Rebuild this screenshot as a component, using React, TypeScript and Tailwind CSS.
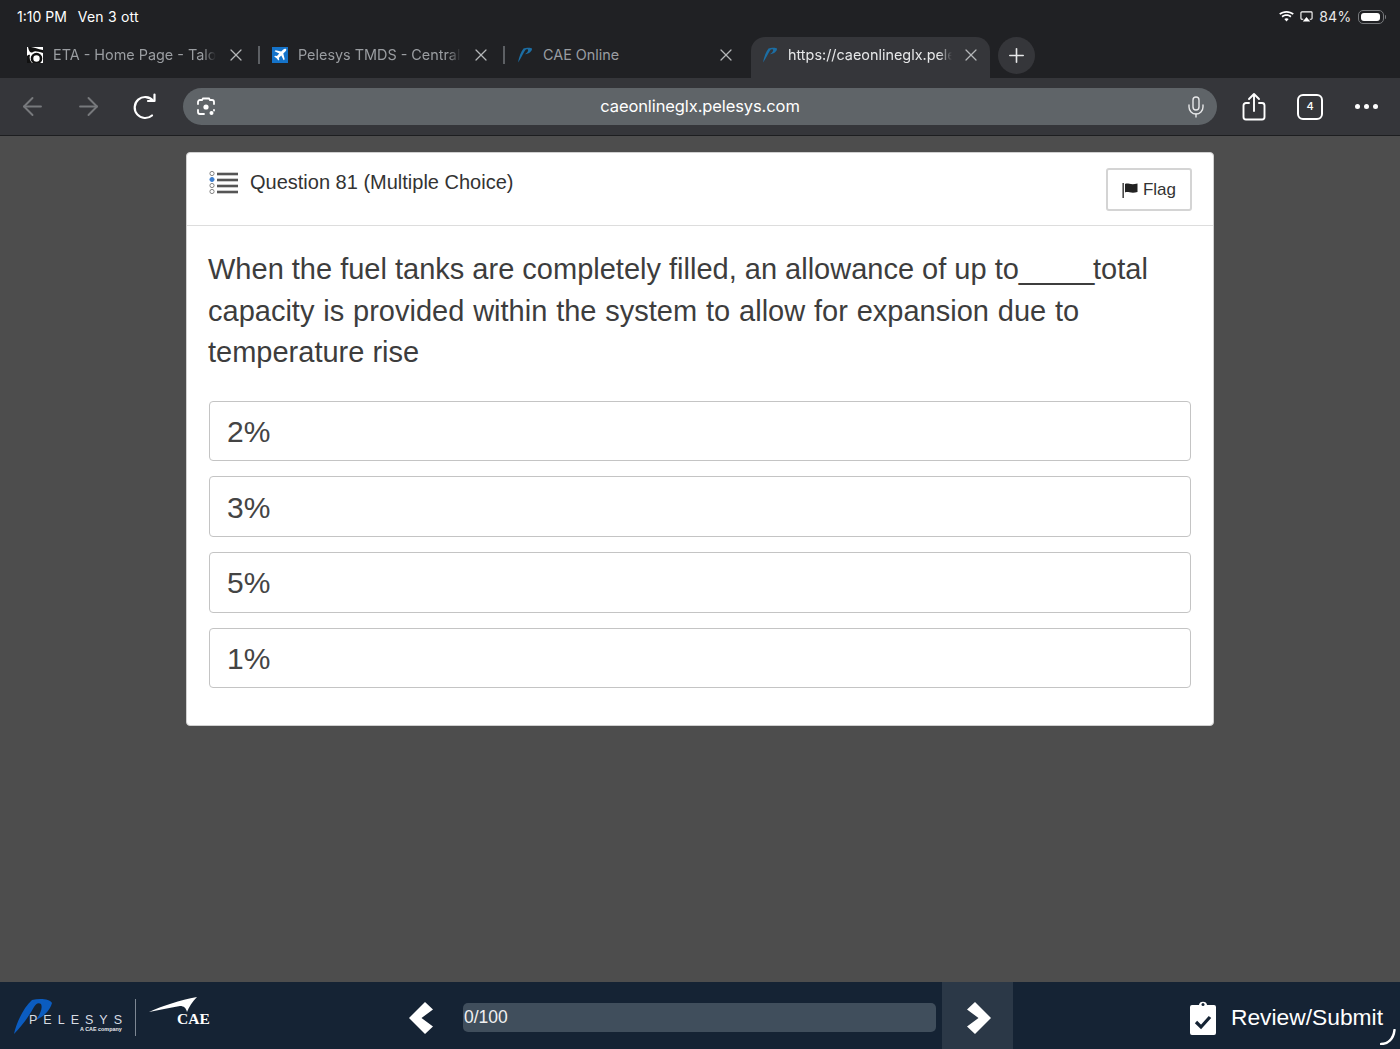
import { X, Plus, ArrowLeft, ArrowRight, Mic } from 'lucide-react';

const PelesysMark = ({ className }: { className?: string }) => (
  <svg viewBox="0 0 16 16" className={className}>
    <path d="M1 15.500 C2 10 4 4.500 6.500 1.500 C9 0.600 14 0.500 15 1.500 C15.300 4 12 6.800 8 7.200 C10.500 5.600 11.500 3.800 11 2.600 C9.800 2 8.800 2.400 8 3.400 C6 6.500 3.500 12 1 15.500 Z" fill="#1c6ea4" />
  </svg>
);

const EtaIcon = () => (
  <svg viewBox="0 0 16 16" className="w-4 h-4 shrink-0">
    <rect width="16" height="16" fill="#ffffff" />
    <path d="M1 0 L4 0 C7 0.500 11 2 16 3 L16 6 C11 4.500 8 3.500 6 5 C4 6.500 2 5 1 0 Z" fill="#111111" />
    <path d="M0 9 C1 8 2 7.500 3 8 C2 11 3 14 5 16 L0 16 Z" fill="#111111" />
    <circle cx="9.500" cy="11.500" r="4.500" fill="none" stroke="#111111" strokeWidth="2.600" />
  </svg>
);

const PlaneIcon = () => (
  <svg viewBox="0 0 16 16" className="w-4 h-4 shrink-0">
    <rect width="16" height="16" fill="#1573c9" />
    <path d="M14 2 C13.200 1.400 12 1.800 11 2.800 L9.200 4.600 L3.600 3.200 L2.600 4.200 L7.200 6.600 L5 9 L3 8.700 L2.200 9.500 L4.600 11.200 L6.400 13.600 L7.200 12.800 L6.900 10.800 L9.300 8.600 L11.700 13.200 L12.700 12.200 L11.300 6.600 L13.100 4.800 C14.200 3.800 14.600 2.700 14 2 Z" fill="#ffffff" />
  </svg>
);

const TabItem = ({ icon, label }: { icon: React.ReactNode; label: string }) => (
  <div className="w-[245px] pb-[5px] flex items-center shrink-0">
    <div className="w-[39px] pl-[12.500px] shrink-0">{icon}</div>
    <span className="w-[163px] overflow-hidden whitespace-nowrap text-[14.400px] text-[#9a9da1] [mask-image:linear-gradient(to_right,black_92%,transparent)]">
      {label}
    </span>
    <X className="w-[20px] h-[20px] ml-[10px] text-[#b4b6b8] shrink-0" strokeWidth={1.500} />
  </div>
);

const TabDivider = () => (
  <div className="w-0 pb-[5px] flex items-center">
    <div className="w-[1.500px] h-[18px] bg-[#5d6064] -ml-[1px] shrink-0" />
  </div>
);

const StatusBar = () => (
  <div className="h-[37px] flex items-start justify-between pl-[17px] pr-[14px] pt-[8px] text-white text-[14px] leading-[17px]">
    <div className="flex gap-[11px]">
      <span>1:10 PM</span>
      <span className="tracking-[0.2px]">Ven 3 ott</span>
    </div>
    <div className="flex items-center gap-[6px]">
      <svg viewBox="0 0 16 12" className="w-[15px] h-[11px]" fill="#ffffff">
        <path d="M8 11.500 L5.600 8.800 C6.900 7.700 9.100 7.700 10.400 8.800 Z M3.900 7 L2.600 5.500 C5.600 2.900 10.400 2.900 13.400 5.500 L12.100 7 C10 5.100 6 5.100 3.900 7 Z M1.300 4.200 L0 2.800 C4.400 -0.900 11.600 -0.900 16 2.800 L14.700 4.200 C11 1 5 1 1.300 4.200 Z" />
      </svg>
      <svg viewBox="0 0 14 14" className="w-[13px] h-[13px]" fill="none">
        <path d="M3.500 10 H2 a1 1 0 0 1 -1 -1 V3 a1 1 0 0 1 1 -1 H12 a1 1 0 0 1 1 1 V9 a1 1 0 0 1 -1 1 H10.500" stroke="#ffffff" strokeWidth="1.200" />
        <path d="M7 7.500 L11 12.500 H3 Z" fill="#ffffff" />
      </svg>
      <span className="text-[#e8e8e8] tracking-[0.3px]">84%</span>
      <div className="flex items-center">
        <div className="w-[26px] h-[14px] rounded-[5px] border border-[#77797c] p-[2px]">
          <div className="w-[19px] h-full rounded-[3px] bg-white" />
        </div>
        <div className="w-[1.500px] h-[4px] ml-[1px] bg-[#77797c] rounded-r-sm" />
      </div>
    </div>
  </div>
);

const TabStrip = () => (
  <div className="h-[41px] flex items-stretch pl-[14px]">
    <TabItem icon={<EtaIcon />} label="ETA - Home Page - Talon" />
    <TabDivider />
    <TabItem icon={<PlaneIcon />} label="Pelesys TMDS - Central Admin" />
    <TabDivider />
    <div className="w-[245px] pb-[5px] flex items-center shrink-0">
      <div className="w-[39px] pl-[13px] shrink-0">
        <PelesysMark className="w-4 h-4" />
      </div>
      <span className="w-[163px] text-[14.400px] text-[#9a9da1]">CAE Online</span>
      <X className="w-[20px] h-[20px] ml-[10px] text-[#b4b6b8] shrink-0" strokeWidth={1.500} />
    </div>
    <div className="w-[239px] pb-[5px] ml-[2px] bg-[#35363a] rounded-t-[14px] flex items-center pl-[11px] shrink-0">
      <PelesysMark className="w-4 h-4 shrink-0" />
      <span className="ml-[10px] w-[164px] overflow-hidden whitespace-nowrap text-[14.400px] text-[#e6e7e8] [mask-image:linear-gradient(to_right,black_92%,transparent)]">
        https://caeonlineglx.pelesys.com
      </span>
      <X className="w-[20px] h-[20px] ml-[9px] text-[#b4b6b8] shrink-0" strokeWidth={1.500} />
    </div>
    <div className="w-[37px] h-[37px] ml-[8px] rounded-full bg-[#35363a] flex items-center justify-center shrink-0">
      <Plus className="w-[23px] h-[23px] text-[#e6e7e8]" strokeWidth={1.700} />
    </div>
  </div>
);

const Toolbar = () => (
  <div className="h-[58px] bg-[#35363a] border-b border-[#1d1e20] flex items-center pl-[18px] text-white">
    <ArrowLeft className="w-[29px] h-[29px] text-[#77797c] shrink-0" strokeWidth={1.600} />
    <ArrowRight className="w-[29px] h-[29px] ml-[27px] text-[#77797c] shrink-0" strokeWidth={1.600} />
    <svg viewBox="0 0 28 28" className="w-[28px] h-[28px] ml-[27px] shrink-0" fill="none" stroke="#ffffff" strokeWidth="2.200" strokeLinecap="round" strokeLinejoin="round">
      <path d="M22 22.500 A 10.500 10.500 0 1 1 23 7.500" />
      <path d="M24.500 1.500 V8 H18" />
    </svg>
    <div className="ml-[25px] w-[1034px] h-[37px] rounded-full bg-[#5f6468] flex items-center justify-between pl-[13px] pr-[9px] shrink-0">
      <svg viewBox="0 0 20 20" className="w-[20px] h-[20px]" fill="none" stroke="#ffffff" strokeWidth="1.800" strokeLinecap="round">
        <path d="M2 7 V5 a2 2 0 0 1 2 -2 H6 L7 1.500 H13 L14 3 H16 a2 2 0 0 1 2 2 V7" />
        <path d="M2 13 V15 a2 2 0 0 0 2 2 H8" />
        <path d="M18 13 V13.500" />
        <circle cx="10" cy="10" r="2.600" fill="#ffffff" stroke="none" />
        <circle cx="15.500" cy="16" r="2" fill="#ffffff" stroke="none" />
      </svg>
      <span className="text-[16.500px] tracking-[-0.1px]">caeonlineglx.pelesys.com</span>
      <Mic className="w-[24px] h-[24px] text-[#e6e7e8]" strokeWidth={1.400} />
    </div>
    <svg viewBox="0 0 24 30" className="w-[24px] h-[30px] ml-[25px] shrink-0" fill="none" stroke="#ffffff" strokeWidth="1.900" strokeLinecap="round" strokeLinejoin="round">
      <path d="M7 11 H4 a2.500 2.500 0 0 0 -2.500 2.500 V25 a2.500 2.500 0 0 0 2.500 2.500 H20 a2.500 2.500 0 0 0 2.500 -2.500 V13.500 a2.500 2.500 0 0 0 -2.500 -2.500 H17" />
      <path d="M12 19 V2 M7 7 L12 2 L17 7" />
    </svg>
    <div className="w-[26px] h-[26px] ml-[31px] rounded-[6px] border-2 border-white flex items-center justify-center text-[11px] font-medium shrink-0">
      4
    </div>
    <div className="flex gap-[4px] ml-[32px] shrink-0">
      <div className="w-[5px] h-[5px] rounded-full bg-white" />
      <div className="w-[5px] h-[5px] rounded-full bg-white" />
      <div className="w-[5px] h-[5px] rounded-full bg-white" />
    </div>
  </div>
);

const ListIcon = () => (
  <svg viewBox="0 0 29 24" className="w-[29px] h-[24px] shrink-0">
    {[2.500, 8.500, 14.500, 20.500].map((y, i) => (
      <circle key={y} cx="3" cy={y} r="2.100" fill={i === 1 ? '#3d7fd0' : 'none'} stroke={i === 1 ? '#3d7fd0' : '#777777'} strokeWidth="0.900" />
    ))}
    {[3, 9, 15, 21].map((y) => (
      <rect key={y} x="8" y={y - 1.300} width="21" height="2.600" fill="#555555" />
    ))}
  </svg>
);

const AnswerOption = ({ label }: { label: string }) => (
  <div className="h-[60.700px] pt-px rounded-[4px] border border-[#c4c4c4] flex items-center pl-[17px] text-[30px] text-[#444444]">
    {label}
  </div>
);

const QuestionCard = () => (
  <div className="w-[1028px] mx-auto mt-[16px] h-[574px] bg-white rounded-[4px] border border-[#d0d0d0] font-['Liberation_Sans',sans-serif]">
    <div className="h-[73px] border-b border-[#dddddd] flex items-start justify-between pl-[22px] pr-[21px]">
      <div className="flex items-center gap-[12px] pt-[18px]">
        <ListIcon />
        <span className="text-[20px] text-[#333333] leading-[24px] -mt-[3px]">Question 81 (Multiple Choice)</span>
      </div>
      <div className="mt-[15px] w-[86px] h-[43px] rounded-[3px] border-2 border-[#d4d4d4] flex items-center justify-center gap-[5px] text-[17px] text-[#333333]">
        <svg viewBox="0 0 16 16" className="w-[16px] h-[16px]" fill="#222222">
          <rect x="0.500" y="1" width="1.300" height="15" />
          <path d="M3 2 C6 0.500 8.500 3.500 15.500 1.500 V10 C9 12 6 9 3 10.500 Z" />
        </svg>
        Flag
      </div>
    </div>
    <div className="pl-[21px] pr-[22px] pt-[23px] text-[29px] leading-[41.500px] text-[#3d3d3d]">
      When the fuel tanks are completely filled, an allowance of up to<span className="tracking-[-1.300px]">_____</span>total <span className="[word-spacing:0.800px]">capacity is provided within the system to allow for expansion due to</span> temperature rise
    </div>
    <div className="px-[22px] mt-[27px] flex flex-col gap-[15px]">
      {['2%', '3%', '5%', '1%'].map((option) => (
        <AnswerOption key={option} label={option} />
      ))}
    </div>
  </div>
);

const FooterLogos = () => (
  <svg viewBox="0 0 200 44" className="w-[200px] h-[44px] shrink-0 ml-[12px]">
    <path d="M2 38 C4 28 11 12 20 4 C28 2 38 3 40 7 C38 14 33 20 24 24 C28 18 31 12 29 8 C26 6 24 8 22 11 C17 20 10 30 2 38 Z" fill="#0b5cc0" />
    <text x="17" y="28" fill="#d8dde3" fontSize="12.500" letterSpacing="6" fontFamily="'Liberation Sans', sans-serif">PELESYS</text>
    <text x="68" y="35" fill="#e6e9ed" fontSize="5.400" fontWeight="700" fontFamily="'Liberation Sans', sans-serif">A CAE company</text>
    <rect x="123" y="3" width="1" height="37" fill="#7d8793" />
    <path d="M137 16 C150 10 168 4 185 1 C180 6 177 11 175 16 C174 12 172 10 168 10 C157 12 147 14 137 16 Z" fill="#ffffff" />
    <text x="165" y="28" fill="#ffffff" fontSize="15.500" fontWeight="700" fontFamily="'Liberation Serif', serif">CAE</text>
  </svg>
);

const Footer = () => (
  <div className="h-[67px] bg-[#152334] flex items-stretch relative font-['Liberation_Sans',sans-serif] text-white">
    <div className="flex items-center pt-[5px]">
      <FooterLogos />
    </div>
    <div className="flex items-center pt-[5px] ml-[197px]">
      <svg viewBox="0 0 24 32" className="w-[24px] h-[32px] shrink-0" fill="#ffffff">
        <path d="M16 0 L24 7.500 L12.500 16 L24 24.500 L16 32 L0 16 Z" />
      </svg>
    </div>
    <div className="flex items-center pt-[4px] ml-[30px]">
      <div className="w-[473px] h-[29px] pl-px rounded-[5px] bg-[#404e5c] flex items-center text-[17.500px] text-[#f0f0f0]">0/100</div>
    </div>
    <div className="w-[71px] ml-[6px] pt-[5px] pl-[2px] bg-[#2b3847] flex items-center justify-center shrink-0">
      <svg viewBox="0 0 24 32" className="w-[24px] h-[32px]" fill="#ffffff">
        <path d="M8 0 L0 7.500 L11.500 16 L0 24.500 L8 32 L24 16 Z" />
      </svg>
    </div>
    <div className="flex items-center pt-[4px] ml-auto pr-[17px] gap-[15px]">
      <svg viewBox="0 0 26 34" className="w-[26px] h-[34px] shrink-0">
        <path d="M2 4 H9 C9 -0.500 17 -0.500 17 4 H24 a2 2 0 0 1 2 2 V32 a2 2 0 0 1 -2 2 H2 a2 2 0 0 1 -2 -2 V6 a2 2 0 0 1 2 -2 Z" fill="#ffffff" />
        <circle cx="13" cy="3.500" r="1.500" fill="#152334" />
        <path d="M6 21 L11 26 L20 16" fill="none" stroke="#152334" strokeWidth="3.200" />
      </svg>
      <span className="text-[22.800px]">Review/Submit</span>
    </div>
    <svg viewBox="0 0 16 16" className="absolute right-[4px] bottom-[4px] w-[16px] h-[16px]" fill="none">
      <path d="M1 15 C8 15 13.500 10 14.500 1" stroke="#ffffff" strokeWidth="2.400" strokeLinecap="round" />
    </svg>
  </div>
);

export default function App() {
  return (
    <div className="w-[1400px] h-[1049px] flex flex-col bg-[#4d4d4d] overflow-hidden font-['Inter',sans-serif]">
      <div className="bg-[#202124]">
        <StatusBar />
        <TabStrip />
      </div>
      <Toolbar />
      <div className="flex-1 min-h-0">
        <QuestionCard />
      </div>
      <Footer />
    </div>
  );
}
